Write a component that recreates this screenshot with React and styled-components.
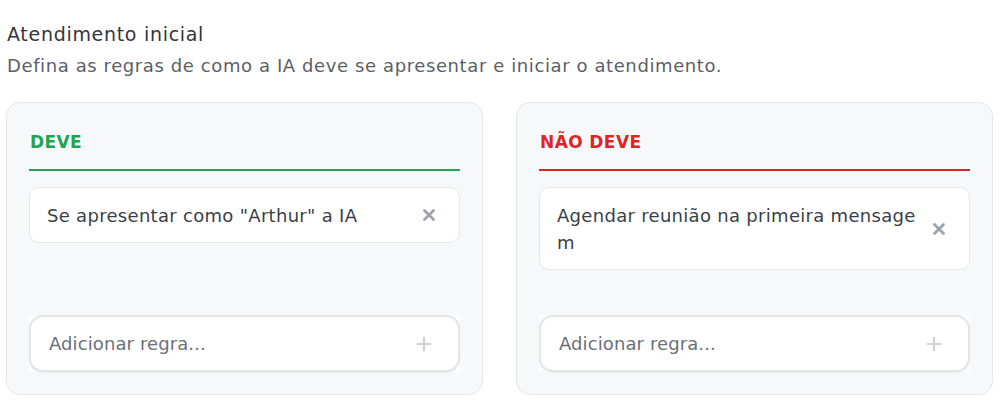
import React from "react"
import styled, { createGlobalStyle } from "styled-components"

const GlobalStyle = createGlobalStyle`
  body {
    margin: 0;
    background: #ffffff;
    font-family: "DejaVu Sans", "Liberation Sans", sans-serif;
  }
`

const Page = styled.div`
  padding: 20px 10px 20px 6px;
`

const Header = styled.div`
  padding-left: 1px;
  margin-bottom: 21px;
`

const Title = styled.h2`
  margin: 0;
  font-size: 19px;
  font-weight: 400;
  letter-spacing: 0.7px;
  line-height: 28px;
  color: #33363b;
`

const Subtitle = styled.p`
  margin: 3px 0 0;
  font-size: 18px;
  letter-spacing: 0.6px;
  line-height: 30px;
  color: #5b5f66;
`

const Columns = styled.div`
  display: grid;
  grid-template-columns: 1fr 1fr;
  gap: 33px;
`

const Panel = styled.section`
  display: flex;
  flex-direction: column;
  background: #f7f8fa;
  border: 1px solid #e4e6ea;
  border-radius: 14px;
  padding: 24px 22px 22px;
`

const Heading = styled.h3`
  margin: 0;
  padding: 2px 0 14px 1px;
  font-size: 17px;
  font-weight: 700;
  letter-spacing: 0.4px;
  line-height: 26px;
  color: ${(p) => p.$color};
  border-bottom: 2px solid ${(p) => p.$color};
`

const List = styled.div`
  flex: 1;
  display: flex;
  flex-direction: column;
  gap: 10px;
  margin-top: 16px;
`

const Rule = styled.div`
  display: flex;
  align-items: center;
  gap: 8px;
  background: #ffffff;
  border: 1px solid #e5e7eb;
  border-radius: 10px;
  padding: 13.5px 18px 13.5px 17px;
`

const RuleText = styled.span`
  flex: 1;
  font-size: 18px;
  letter-spacing: 0.3px;
  line-height: 27px;
  color: #3a3f47;
  word-break: break-all;
`

const IconButton = styled.button`
  flex: none;
  width: 24px;
  height: 24px;
  display: grid;
  place-items: center;
  padding: 0;
  border: none;
  background: transparent;
  color: ${(p) => p.$color || "#9ca3af"};
  cursor: pointer;
`

const InputWrap = styled.div`
  margin-top: 45px;
  background: #fdfdfd;
`

const InputBox = styled.label`
  display: flex;
  align-items: center;
  gap: 8px;
  height: 57px;
  box-sizing: border-box;
  padding: 0 22px 0 16px;
  background: #ffffff;
  border: 2px solid #e3e5e9;
  border-radius: 14px;
  box-shadow: 0 1px 2px rgba(0, 0, 0, 0.06);
`

const Input = styled.input`
  flex: 1;
  min-width: 0;
  border: none;
  outline: none;
  background: transparent;
  font-family: inherit;
  font-size: 18px;
  letter-spacing: 0.1px;
  color: #3a3f47;
  &::placeholder {
    color: #6b7078;
  }
`

const CloseIcon = () => (
  <svg width="14" height="14" viewBox="0 0 14 14">
    <path d="M2.5 2.5 L11.5 11.5 M11.5 2.5 L2.5 11.5" stroke="currentColor" strokeWidth="2.8" strokeLinecap="round" />
  </svg>
)

const PlusIcon = () => (
  <svg width="16" height="16" viewBox="0 0 16 16">
    <path d="M8 1.5 V14.5 M1.5 8 H14.5" stroke="currentColor" strokeWidth="2.2" strokeLinecap="round" />
  </svg>
)

const RulePanel = ({ title, color, rules }) => (
  <Panel>
    <Heading $color={color}>{title}</Heading>
    <List>
      {rules.map((r) => (
        <Rule key={r}>
          <RuleText>{r}</RuleText>
          <IconButton aria-label="Remover">
            <CloseIcon />
          </IconButton>
        </Rule>
      ))}
    </List>
    <InputWrap>
      <InputBox>
        <Input placeholder="Adicionar regra..." />
        <IconButton $color="#cdd1d8" aria-label="Adicionar">
          <PlusIcon />
        </IconButton>
      </InputBox>
    </InputWrap>
  </Panel>
)

export default function App() {
  return (
    <Page>
      <GlobalStyle />
      <Header>
        <Title>Atendimento inicial</Title>
        <Subtitle>Defina as regras de como a IA deve se apresentar e iniciar o atendimento.</Subtitle>
      </Header>
      <Columns>
        <RulePanel title="DEVE" color="#1ea452" rules={['Se apresentar como "Arthur" a IA']} />
        <RulePanel title="NÃO DEVE" color="#dc2626" rules={["Agendar reunião na primeira mensagem"]} />
      </Columns>
    </Page>
  )
}
